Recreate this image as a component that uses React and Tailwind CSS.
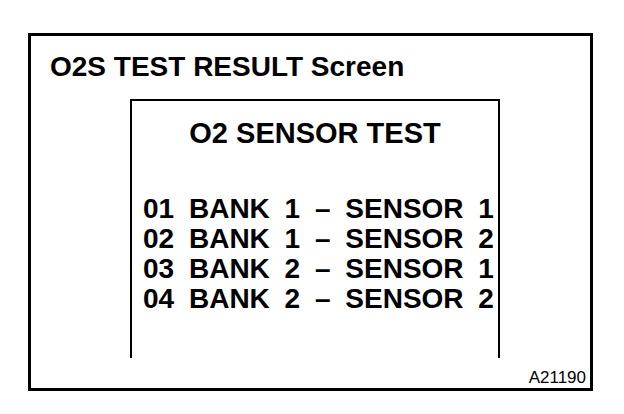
export default function App() {
  const rows = [
    ['01', '1', '1'],
    ['02', '1', '2'],
    ['03', '2', '1'],
    ['04', '2', '2'],
  ]
  return (
    <div className="w-[624px] h-[414px] bg-white pt-[33px] pl-[28px] font-['Liberation_Sans',Arial,sans-serif] text-black">
      <div className="w-[565px] h-[358px] border-[3px] border-black flex flex-col">
        <h1 className="font-bold text-[28px] leading-[28px] ml-[19px] mt-[17px]">O2S TEST RESULT Screen</h1>
        <div className="ml-[99px] mt-[18px] w-[370px] h-[259px] border-t-2 border-l-2 border-r-2 border-black flex flex-col">
          <div className="font-bold text-[29px] leading-[28px] text-center mt-[18px]">O2 SENSOR TEST</div>
          <div className="mt-[47px] pl-[11px] pr-[4px] flex flex-col font-bold text-[28px] leading-[30px]">
            {rows.map((r) => (
              <div key={r[0]} className="flex justify-between">
                <span>{r[0]}</span>
                <span>BANK</span>
                <span>{r[1]}</span>
                <span>–</span>
                <span>SENSOR</span>
                <span>{r[2]}</span>
              </div>
            ))}
          </div>
        </div>
        <div className="mt-auto self-end mr-[4px] mb-[2px] text-[17px] leading-none">A21190</div>
      </div>
    </div>
  )
}
